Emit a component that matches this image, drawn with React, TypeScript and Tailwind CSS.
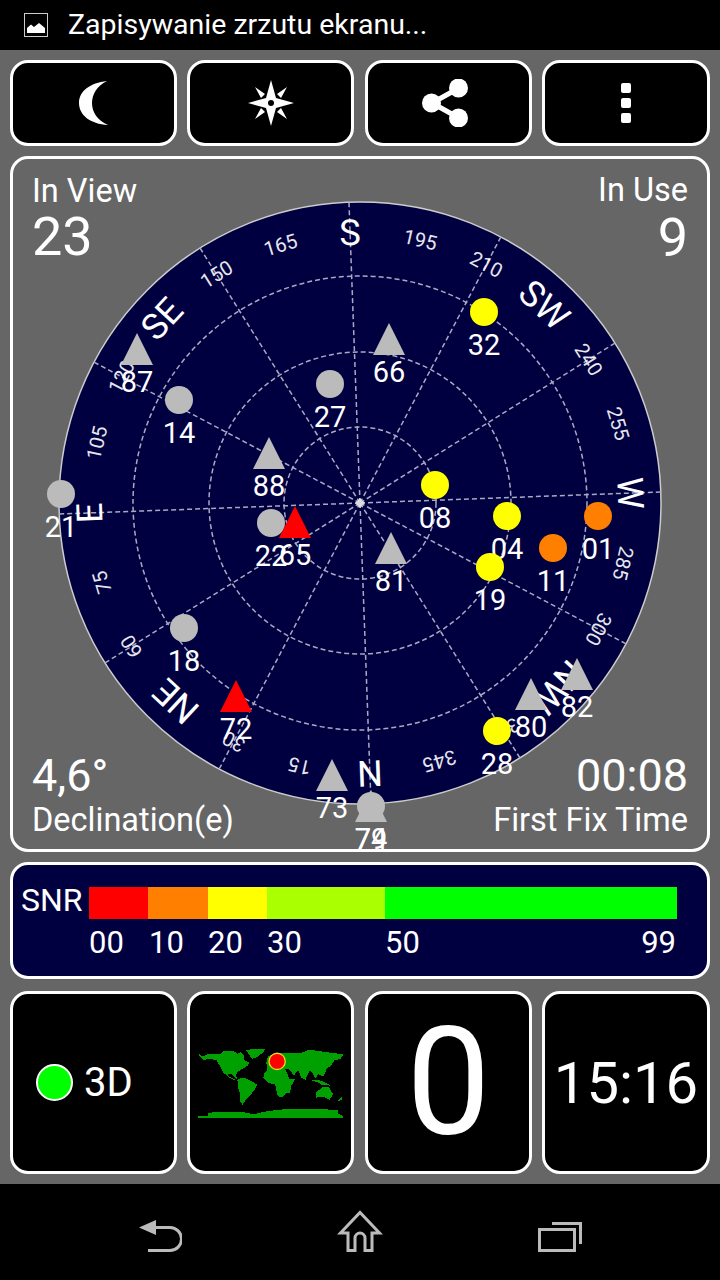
const CX = 360;
const CY = 503;
const TILT = -2.1;

const cardinals: Record<number, string> = { 0: "N", 45: "NE", 90: "E", 135: "SE", 180: "S", 225: "SW", 270: "W", 315: "NW" };

type Sat = { id: string; x: number; y: number; kind: "dot" | "tri"; color: string };

const GRAY = "#bbbbbb";
const YELLOW = "#ffff00";
const ORANGE = "#ff8000";
const RED = "#ff0000";

const sats: Sat[] = [
  { id: "21", x: 61, y: 494, kind: "dot", color: GRAY },
  { id: "87", x: 137, y: 333, kind: "tri", color: GRAY },
  { id: "14", x: 179, y: 400, kind: "dot", color: GRAY },
  { id: "27", x: 330, y: 384, kind: "dot", color: GRAY },
  { id: "66", x: 389, y: 323, kind: "tri", color: GRAY },
  { id: "88", x: 269, y: 437, kind: "tri", color: GRAY },
  { id: "32", x: 484, y: 312, kind: "dot", color: YELLOW },
  { id: "22", x: 271, y: 523, kind: "dot", color: GRAY },
  { id: "65", x: 295, y: 506, kind: "tri", color: RED },
  { id: "08", x: 435, y: 485, kind: "dot", color: YELLOW },
  { id: "04", x: 507, y: 516, kind: "dot", color: YELLOW },
  { id: "01", x: 598, y: 516, kind: "dot", color: ORANGE },
  { id: "11", x: 553, y: 548, kind: "dot", color: ORANGE },
  { id: "19", x: 490, y: 567, kind: "dot", color: YELLOW },
  { id: "81", x: 391, y: 532, kind: "tri", color: GRAY },
  { id: "18", x: 184, y: 628, kind: "dot", color: GRAY },
  { id: "72", x: 236, y: 680, kind: "tri", color: RED },
  { id: "73", x: 332, y: 759, kind: "tri", color: GRAY },
  { id: "80", x: 531, y: 678, kind: "tri", color: GRAY },
  { id: "82", x: 577, y: 658, kind: "tri", color: GRAY },
  { id: "28", x: 497, y: 731, kind: "dot", color: YELLOW },
  { id: "79", x: 371, y: 790, kind: "tri", color: GRAY },
  { id: "74", x: 371, y: 806, kind: "dot", color: GRAY },
];

const SkyPlot = () => {
  const ticks = [];
  for (let a = 0; a < 360; a += 15) ticks.push(a);
  const spokes = ticks.filter((a) => a % 30 === 0);

  return (
    <svg className="absolute -left-[3px] -top-[3px] h-[696px] w-[700px]" viewBox="10 156 700 696">
      <circle cx={CX} cy={CY} r={301} fill="#000040" stroke="#cccccc" strokeWidth={1.5} />
      <g stroke="#a9a9c4" strokeWidth={1.5} strokeDasharray="5 3" fill="none">
        <circle cx={CX} cy={CY} r={76} />
        <circle cx={CX} cy={CY} r={151} />
        <circle cx={CX} cy={CY} r={227} />
        {spokes.map((a) => (
          <line key={a} x1={CX} y1={CY} x2={CX} y2={CY - 301} transform={`rotate(${a - 180 + TILT} ${CX} ${CY})`} />
        ))}
      </g>
      <path d={`M${CX} ${CY - 5}L${CX + 5} ${CY}L${CX} ${CY + 5}L${CX - 5} ${CY}Z`} fill="#dddddd" />
      {ticks.map((a) => {
        const label = cardinals[a] ?? String(a);
        const big = a in cardinals;
        return (
          <text
            key={a}
            transform={`translate(${CX} ${CY}) rotate(${a - 180 + TILT}) translate(0 ${big ? -258 : -263})`}
            textAnchor="middle"
            fill="white"
            className={big ? "text-[36px]" : "text-[20px]"}
            opacity={big ? 1 : 0.9}
          >
            {label}
          </text>
        );
      })}
      {sats.map((s) =>
        s.kind === "dot" ? (
          <g key={s.id}>
            <circle cx={s.x} cy={s.y} r={14} fill={s.color} />
            <text x={s.x} y={s.y + 43} textAnchor="middle" fill="white" className="text-[29px]">
              {s.id}
            </text>
          </g>
        ) : (
          <g key={s.id}>
            <path d={`M${s.x} ${s.y}L${s.x + 16} ${s.y + 32}H${s.x - 16}Z`} fill={s.color} />
            <text x={s.x} y={s.y + 59} textAnchor="middle" fill="white" className="text-[29px]">
              {s.id}
            </text>
          </g>
        ),
      )}
    </svg>
  );
};

const WorldMap = () => (
  <svg className="h-[72px] w-[148px]" viewBox="590 185 445 216" shapeRendering="crispEdges">
    <g fill="#00a000">
      {/* north america */}
      <path d="M595 204L607 213L625 205L660 205L668 198L700 197L712 205L722 200L732 212L730 222L746 232L744 240L728 250L714 258L707 268L710 282L702 274L692 264L682 268L690 276L714 286L700 284L685 276L668 260L658 240L648 224L630 221L610 223L596 212Z" />
      {/* greenland */}
      <path d="M738 194L765 190L795 191L788 202L770 215L755 221L748 210Z" />
      {/* south america */}
      <path d="M714 282L728 276L750 285L771 298L760 318L746 334L735 346L727 358L720 350L719 325L712 300Z" />
      {/* africa */}
      <path d="M793 264L803 250L830 248L855 252L869 282L886 280L873 302L863 318L847 335L833 333L825 298L802 291L789 278Z" />
      {/* eurasia */}
      <path d="M798 232L804 212L830 203L870 203L900 204L928 193L970 199L1030 207L1021 221L1003 225L992 241L980 250L970 274L953 266L947 280L936 262L930 254L916 283L904 277L894 254L882 270L866 252L855 252L830 249L802 251Z" />
      {/* australia */}
      <path d="M947 323L967 305L985 304L999 326L989 344L970 334L949 337Z" />
      {/* indonesia */}
      <path d="M930 284L950 290L965 298L992 301L975 291L955 284Z" />
      {/* madagascar, nz */}
      <path d="M863 310L873 305L869 323L861 323Z" />
      <path d="M1014 347L1027 334L1025 344Z" />
      {/* antarctica */}
      <path d="M594 393L622 391L625 382L720 379L760 387L800 378L870 370L950 370L1015 375L1015 385L1030 392L1030 399L594 399Z" />
    </g>
    <circle cx={831} cy={228} r={24.5} fill="#ff0000" stroke="#e8d820" strokeWidth={4} shapeRendering="auto" />
  </svg>
);

const SnrBar = () => (
  <div className="flex w-[588px] flex-col">
    <div className="flex h-[32px] w-full">
      <div className="w-[59px] bg-[#ff0000]" />
      <div className="w-[60px] bg-[#ff8000]" />
      <div className="w-[59px] bg-[#ffff00]" />
      <div className="w-[118px] bg-[#aaff00]" />
      <div className="w-[292px] bg-[#00ff00]" />
    </div>
    <div className="mt-[7px] flex text-[31px] leading-[34px] text-white">
      <span className="w-[60px]">00</span>
      <span className="w-[59px]">10</span>
      <span className="w-[59px]">20</span>
      <span className="w-[118px]">30</span>
      <span className="flex-1">50</span>
      <span className="-translate-x-[1px]">99</span>
    </div>
  </div>
);

const boxClass = "flex items-center justify-center rounded-[18px] border-[3px] border-white bg-black";

export default function App() {
  return (
    <div className="flex h-[1280px] w-[720px] flex-col overflow-hidden bg-black font-['Roboto',sans-serif] text-white">
      <div className="flex h-[50px] items-center gap-[20px] pl-[24px]">
        <svg className="h-[24px] w-[24px]" viewBox="0 0 24 24">
          <rect x="0.5" y="0.5" width="23" height="23" fill="none" stroke="#cccccc" />
          <path d="M3 20V15L7 11.5L10 14L15 10L21 15V20Z" fill="white" />
        </svg>
        <span className="text-[28.5px] leading-[32px]">Zapisywanie zrzutu ekranu...</span>
      </div>

      <div className="flex flex-1 flex-col gap-[10px] bg-[#666666] p-[10px]">
        <div className="grid h-[86px] grid-cols-[167px_167px_168px_168px] gap-[10px]">
          <button className={boxClass}>
            <svg className="h-[44px] w-[29px]" viewBox="79 81 29 44">
              <path d="M107 81C90 83 79 91 79 103C79 115 90 124 108 125C97 120 92 112 92 103C92 94 97 86 107 81Z" fill="white" />
            </svg>
          </button>
          <button className={boxClass}>
            <svg className="h-[46px] w-[46px]" viewBox="248 80 46 46">
              <path d="M271 80L276 98L294 103L276 108L271 126L266 108L248 103L266 98Z" fill="white" />
              <path d="M255 87L265 94L261 98ZM287 87L277 94L281 98ZM255 119L265 112L261 108ZM287 119L277 112L281 108Z" fill="white" />
              <circle cx="271" cy="103" r="3" fill="black" />
            </svg>
          </button>
          <button className={`${boxClass} ml-px`}>
            <svg className="mr-[7px] h-[48px] w-[46px]" viewBox="422 79 46 48">
              <path d="M459 88L432 103L459 118" fill="none" stroke="white" strokeWidth="5" />
              <circle cx="458.5" cy="88" r="9.5" fill="white" />
              <circle cx="431.5" cy="103" r="9.5" fill="white" />
              <circle cx="458.5" cy="118" r="9.5" fill="white" />
            </svg>
          </button>
          <button className={boxClass}>
            <div className="flex flex-col gap-[5px]">
              <div className="h-[10px] w-[10px] rounded-[2px] bg-white" />
              <div className="h-[10px] w-[10px] rounded-[2px] bg-white" />
              <div className="h-[10px] w-[10px] rounded-[2px] bg-white" />
            </div>
          </button>
        </div>

        <div className="relative flex h-[696px] flex-col justify-between rounded-[18px] border-[3px] border-white px-[19px] pb-[10px] pt-[12px]">
          <SkyPlot />
          <div className="relative flex justify-between">
            <div className="flex flex-col">
              <span className="text-[32.5px] leading-[40px]">In View</span>
              <span className="text-[54px] leading-[52px]">23</span>
            </div>
            <div className="flex flex-col items-end">
              <span className="text-[32.5px] leading-[38px]">In Use</span>
              <span className="text-[54px] leading-[58px]">9</span>
            </div>
          </div>
          <div className="relative flex items-end justify-between">
            <div className="flex flex-col">
              <span className="text-[45px] leading-[50px]">4,6°</span>
              <span className="text-[32.5px] leading-[38px]">Declination(e)</span>
            </div>
            <div className="flex flex-col items-end">
              <span className="text-[45px] leading-[50px]">00:08</span>
              <span className="text-[32.5px] leading-[38px]">First Fix Time</span>
            </div>
          </div>
        </div>

        <div className="flex h-[117px] items-start gap-[5px] rounded-[18px] border-[3px] border-white bg-[#000040] pl-[8px] pt-[22px]">
          <span className="w-[63px] text-[32px] leading-[26px]">SNR</span>
          <SnrBar />
        </div>

        <div className="mt-[2px] grid h-[183px] grid-cols-[167px_167px_168px_168px] gap-[10px]">
          <div className={`${boxClass} gap-[11px] !justify-start pl-[23px]`}>
            <div className="h-[37px] w-[37px] rounded-full border-2 border-white bg-[#00ff00]" />
            <span className="text-[40px] leading-[48px]">3D</span>
          </div>
          <div className={boxClass}>
            <WorldMap />
          </div>
          <div className={`${boxClass} ml-px`}>
            <span className="text-[150px] leading-[160px]">0</span>
          </div>
          <div className={boxClass}>
            <span className="text-[58px] leading-[64px]">15:16</span>
          </div>
        </div>
      </div>

      <div className="flex h-[96px] items-start justify-between px-[138px] pt-[26px]">
        <svg className="mt-[10px] h-[32px] w-[44px]" viewBox="138 1220 44 32">
          <path d="M139 1227.5L156 1220V1235Z" fill="#bbbbbb" />
          <path d="M154 1227.5H170A11 11 0 0 1 170 1250.5H148" fill="none" stroke="#bbbbbb" strokeWidth="3" />
        </svg>
        <svg className="h-[42px] w-[46px]" viewBox="337 1210 46 42">
          <path d="M348 1250.5V1233H340.5L360 1212.5L379.5 1233H372V1250.5H365V1238A5 5 0 0 0 355 1238V1250.5Z" fill="none" stroke="#bbbbbb" strokeWidth="3" />
        </svg>
        <svg className="mt-[12px] h-[30px] w-[44px]" viewBox="538 1222 44 30">
          <rect x="539.5" y="1229.5" width="35" height="21" fill="none" stroke="#bbbbbb" strokeWidth="3" />
          <path d="M552 1223.5H580.5V1244" fill="none" stroke="#bbbbbb" strokeWidth="3" />
        </svg>
      </div>
    </div>
  );
}
